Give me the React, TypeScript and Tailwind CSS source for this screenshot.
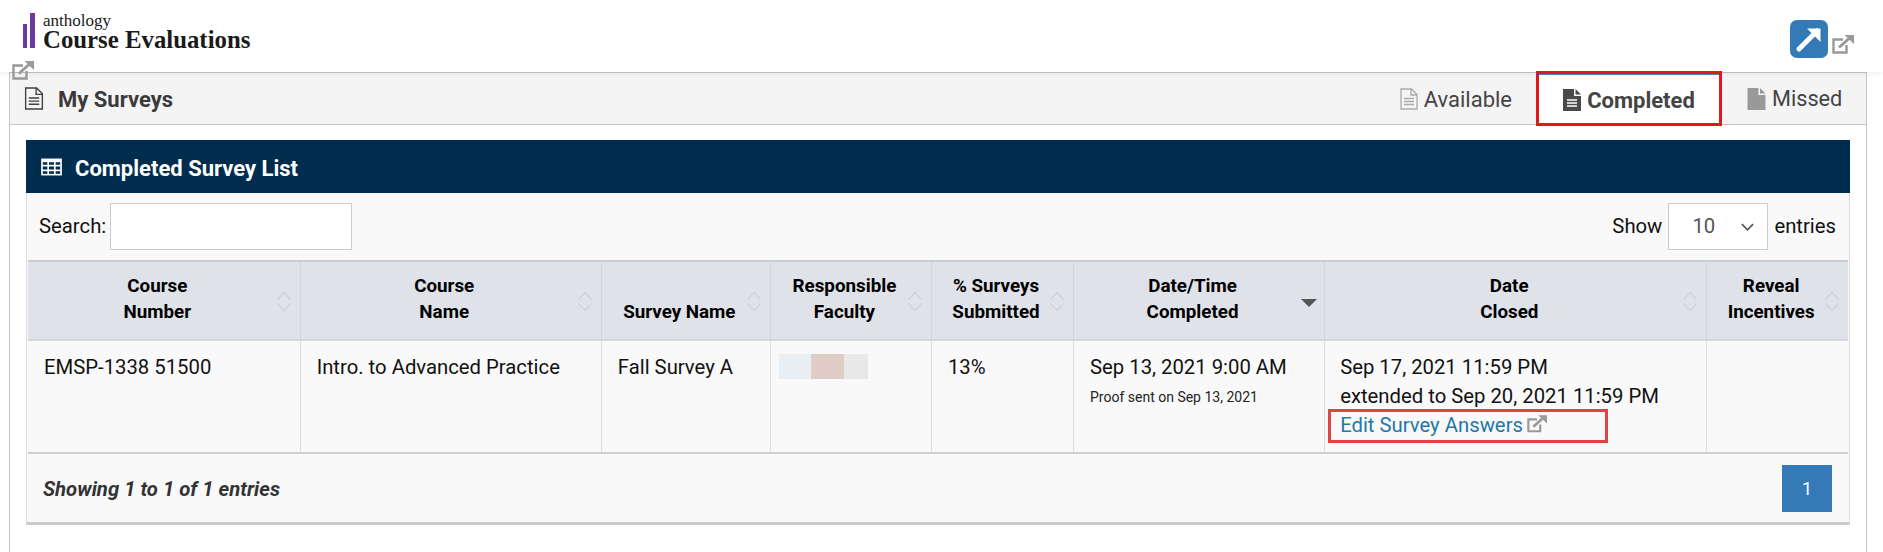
import React from "react";

const Ext = ({ className }: { className?: string }) => (
  <svg viewBox="0 0 22 19" className={className} fill="none">
    <path d="M11 4.500H1.500v13h13V10" stroke="#999999" strokeWidth="2.400" />
    <path d="M7 12.500 17 3.500" stroke="#999999" strokeWidth="3" />
    <path d="M12.500 0H22v9Z" fill="#999999" />
  </svg>
);

const Sort = () => (
  <svg viewBox="0 0 16 23" className="absolute right-[8px] top-[28px] h-[23px] w-[16px]" fill="none" stroke="#cfd2d8" strokeWidth="1.200">
    <path d="M1.500 9.500 8 2.500l6.500 7" />
    <path d="M1.500 13.500 8 20.500l6.500-7" />
  </svg>
);

const FileOutline = ({ color, className }: { color: string; className?: string }) => (
  <svg viewBox="0 0 18 22" className={className} fill="none" stroke={color} strokeWidth="1.300">
    <path d="M1 1h10.500L17 6.500V21H1Z" />
    <path d="M11 1v6h6" />
    <path d="M4 10.500h10M4 13.500h10M4 16.500h10" />
  </svg>
);

const FileSolid = ({ lines, color, className }: { lines: boolean; color: string; className?: string }) => (
  <svg viewBox="0 0 18 22" className={className}>
    <path d="M0 0h11v7h7v15H0Z" fill={color} />
    <path d="M12.500 0 18 5.500h-5.500Z" fill={color} />
    {lines && <path d="M4 11h10M4 14h10M4 17h10" stroke="#ffffff" strokeWidth="1.300" />}
  </svg>
);

const headers: { lines: string[]; w: string }[] = [
  { lines: ["Course", "Number"], w: "w-[272px]" },
  { lines: ["Course", "Name"], w: "w-[301px]" },
  { lines: ["Survey Name"], w: "w-[169px]" },
  { lines: ["Responsible", "Faculty"], w: "w-[161px]" },
  { lines: ["% Surveys", "Submitted"], w: "w-[142px]" },
  { lines: ["Date/Time", "Completed"], w: "w-[251px]" },
  { lines: ["Date", "Closed"], w: "w-[382px]" },
  { lines: ["Reveal", "Incentives"], w: "w-[141px]" },
];

export default function App() {
  return (
    <div className="h-[552px] w-[1883px] overflow-hidden bg-white font-['Roboto',sans-serif] text-[20.3px] text-[#111]">
      <header className="relative flex h-[72px] items-start justify-between shadow-[0_2px_4px_rgba(0,0,0,0.06)]">
        <div className="flex items-end pl-[23px] pt-[12px]">
          <div className="mb-[2px] mr-[8px] flex items-end gap-[3px]">
            <span className="h-[24px] w-[4px] bg-[#6b3a9c]" />
            <span className="h-[35px] w-[5px] bg-[#6b3a9c]" />
          </div>
          <div className="flex flex-col font-['Liberation_Serif',serif] text-[#1a1a1a]">
            <span className="text-[17px] leading-[18px]">anthology</span>
            <span className="text-[24.8px] font-bold leading-[20px]">Course Evaluations</span>
          </div>
        </div>
        <div className="flex items-end pr-[29px] pt-[20px]">
          <svg viewBox="0 0 38 38" className="h-[38px] w-[38px]">
            <rect width="38" height="38" rx="7" fill="#337ab7" />
            <path d="M9 29 27 11" stroke="#fff" strokeWidth="5" strokeLinecap="round" />
            <path d="M17 8.500h13.500V22Z" fill="#fff" />
          </svg>
          <Ext className="mb-[4px] ml-[4px] h-[19px] w-[22px]" />
        </div>
        <Ext className="absolute left-[12px] top-[61px] h-[19px] w-[22px]" />
      </header>

      <main className="ml-[9px] mr-[16px] h-[480px] border-x border-t border-[#c4c4c4]">
        <div className="flex h-[52px] items-center justify-between border-b border-[#c4c4c4] bg-[#f4f4f4]">
          <div className="flex items-center pl-[14px]">
            <FileOutline color="#3f3f3f" className="h-[23px] w-[20px]" />
            <h1 className="ml-[14px] pt-[2px] text-[22px] font-bold text-[#3a3a3a]">My Surveys</h1>
          </div>
          <nav className="flex h-full items-stretch text-[#444]">
            <div className="flex items-center gap-[6px] pr-[24px]">
              <FileOutline color="#aaaaaa" className="h-[22px] w-[18px]" />
              <span className="pt-[2px] text-[22px]">Available</span>
            </div>
            <div className="z-10 -mt-[2px] mb-[-2px] flex w-[186px] items-center justify-center gap-[6px] border-[3px] border-[#e0181c] bg-white shadow-[inset_0_1px_0_#4a86ad]">
              <FileSolid lines color="#4a4a4a" className="mt-[2px] h-[22px] w-[18px]" />
              <span className="pt-[4px] text-[22px] font-bold text-[#444]">Completed</span>
            </div>
            <div className="flex w-[144px] items-center gap-[6px] pl-[25px]">
              <FileSolid lines={false} color="#999999" className="h-[22px] w-[19px]" />
              <span className="pt-[2px] text-[21.7px]">Missed</span>
            </div>
          </nav>
        </div>

        <section className="mx-[16px] mt-[15px] w-[1824px] border-x border-b-[3px] border-x-[#dddddd] border-b-[#cccccc] bg-[#f9f9f9]">
          <div className="-mx-px flex h-[53px] items-center gap-[13px] bg-[#002c4d] pl-[15px] text-white">
            <svg viewBox="0 0 22 18" className="h-[18px] w-[21px]" fill="none" stroke="#fff" strokeWidth="1.700">
              <rect x="1" y="1" width="20" height="16" fill="#002c4d" />
              <path d="M1 2.500h20" strokeWidth="3" />
              <path d="M1 7.500h20M1 12.500h20M7.500 3v14M14.500 3v14" />
            </svg>
            <h2 className="pt-[3px] text-[22px] font-bold">Completed Survey List</h2>
          </div>

          <div className="flex h-[67px] items-center justify-between pl-[12px] pr-[13px]">
            <label className="flex items-center gap-[4px]">
              Search:
              <input className="h-[47px] w-[242px] border border-[#cccccc] bg-white" />
            </label>
            <div className="flex items-center gap-[6px]">
              Show
              <div className="flex h-[47px] w-[100px] items-center justify-between border border-[#cccccc] bg-white pl-[23px] pr-[13px] text-[#555]">
                10
                <svg viewBox="0 0 14 8" className="h-[8px] w-[13px]" fill="none" stroke="#555" strokeWidth="1.800">
                  <path d="m1 1 6 6 6-6" />
                </svg>
              </div>
              <span>entries</span>
            </div>
          </div>

          <table className="ml-[1px] w-[1820px] table-fixed border-collapse">
            <thead>
              <tr className="h-[79px] border-y-[2px] border-t-[#c9ccd1] border-b-[#d6d8dc] bg-[#dfe2e9]">
                {headers.map((h, i) => (
                  <th key={i} className={`relative ${h.w} border-r border-[#d3d5d8] pb-[14px] pl-[8px] pr-[21px] align-bottom text-[18.8px] font-bold leading-[26px] text-black last:border-r-0`}>
                    {h.lines.map((l) => (
                      <div key={l}>{l}</div>
                    ))}
                    {i === 5 ? (
                      <span className="absolute right-[7px] top-[37px] h-0 w-0 border-x-[8px] border-t-[8px] border-x-transparent border-t-[#555]" />
                    ) : (
                      <Sort />
                    )}
                  </th>
                ))}
              </tr>
            </thead>
            <tbody>
              <tr className="h-[113px] border-b-[2px] border-[#cfcfcf] align-top leading-[29px]">
                <td className="border-r border-[#dddddd] px-[16px] pt-[12px]">EMSP-1338 51500</td>
                <td className="border-r border-[#dddddd] px-[16px] pt-[12px]">Intro. to Advanced Practice</td>
                <td className="border-r border-[#dddddd] px-[16px] pt-[12px]">Fall Survey A</td>
                <td className="border-r border-[#dddddd] px-[8px] pt-[13px]">
                  <div className="flex h-[25px]">
                    <span className="w-[32px] bg-[#e9eef2]" />
                    <span className="w-[33px] bg-[#e0cdc8]" />
                    <span className="w-[24px] bg-[#e8e8e8]" />
                  </div>
                </td>
                <td className="border-r border-[#dddddd] px-[16px] pt-[12px]">13%</td>
                <td className="border-r border-[#dddddd] px-[16px] pt-[12px]">
                  <div>Sep 13, 2021 9:00 AM</div>
                  <div className="text-[14px] leading-[30px] text-[#222]">Proof sent on Sep 13, 2021</div>
                </td>
                <td className="relative border-r border-[#dddddd] px-[15px] pt-[12px]">
                  <div>Sep 17, 2021 11:59 PM</div>
                  <div>extended to Sep 20, 2021 11:59 PM</div>
                  <a className="flex items-center gap-[4px] text-[#1f78a6]">
                    Edit Survey Answers
                    <Ext className="mb-[4px] h-[18px] w-[20px]" />
                  </a>
                  <span className="absolute left-[3px] top-[68px] h-[34px] w-[280px] border-[3px] border-[#e04343]" />
                </td>
                <td />
              </tr>
            </tbody>
          </table>

          <div className="flex h-[68px] items-center justify-between pl-[16px] pr-[17px]">
            <span className="pt-[2px] font-bold italic text-[#333]">Showing 1 to 1 of 1 entries</span>
            <span className="flex h-[47px] w-[50px] items-center justify-center bg-[#337ab7] text-[18px] text-white">1</span>
          </div>
        </section>
      </main>
    </div>
  );
}
